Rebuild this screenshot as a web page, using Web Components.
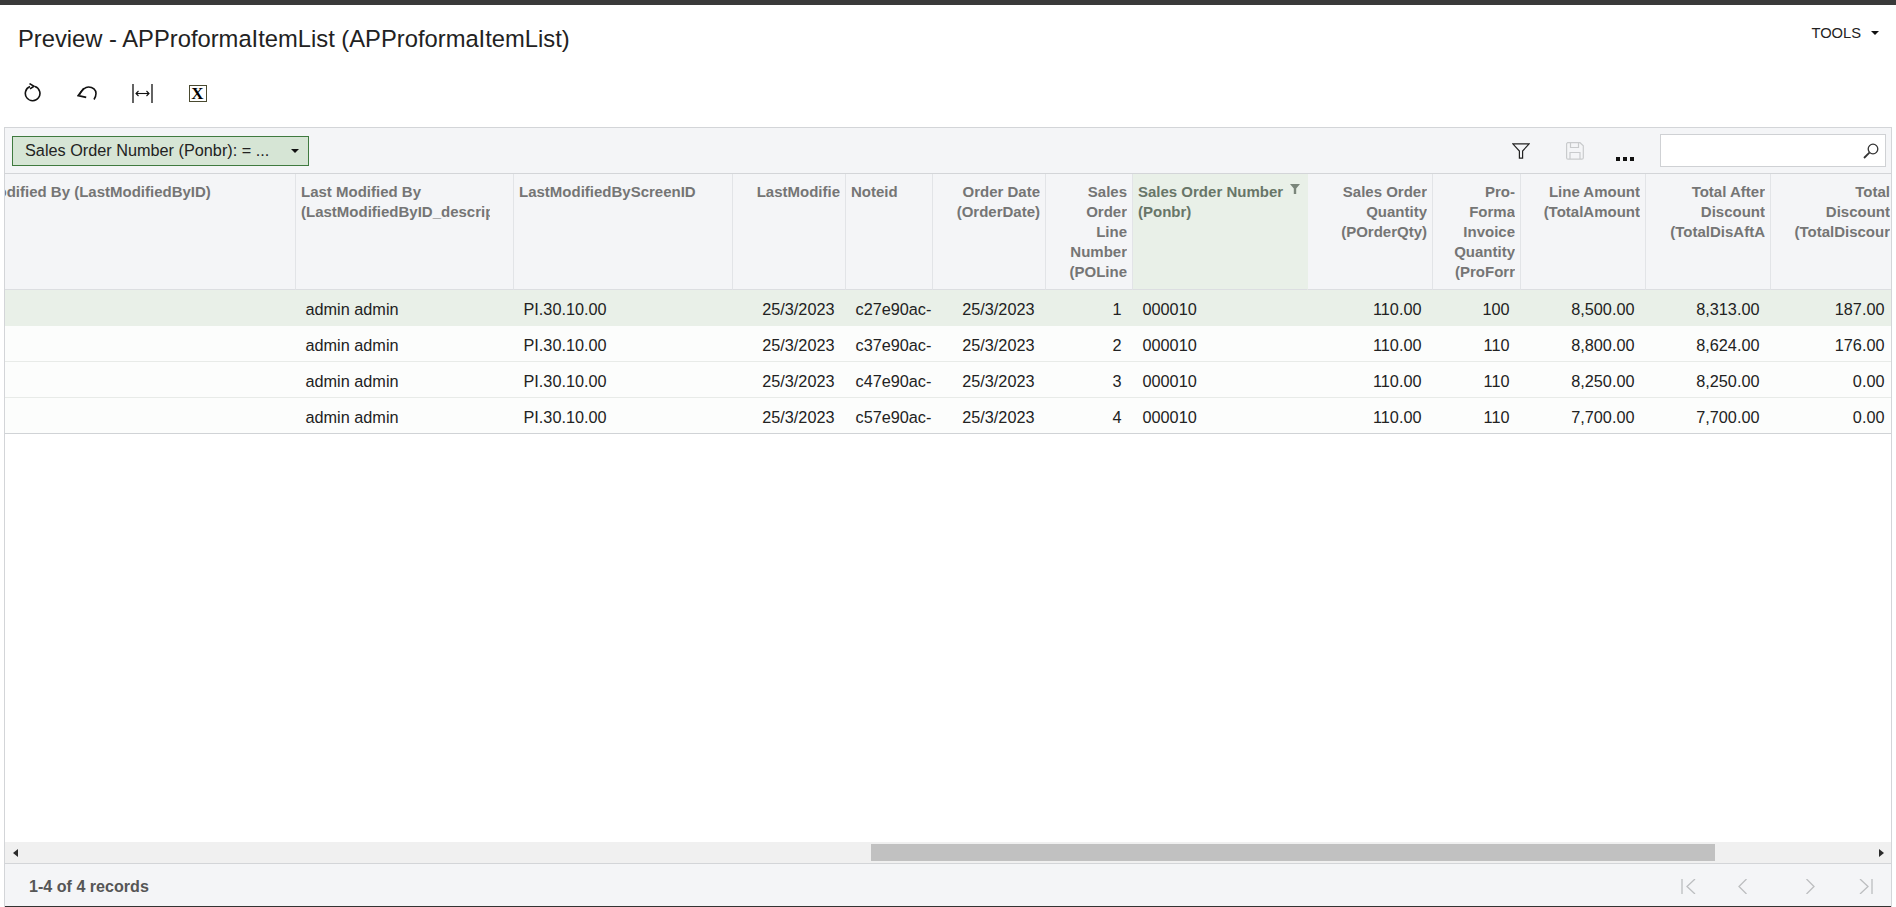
<!DOCTYPE html>
<html>
<head>
<meta charset="utf-8">
<title>Preview - APProformaItemList</title>
<style>
  html, body { margin: 0; height: 100%; overflow: hidden; background: #fff; }
  body { display: flex; flex-direction: column; height: 907px; font-family: "Liberation Sans", Arial, sans-serif; color: #222; }
</style>
</head>
<body>
<title-bar heading="Preview - APProformaItemList (APProformaItemList)"></title-bar>
<icon-toolbar></icon-toolbar>
<data-panel>
  <filter-bar slot="top" label="Sales Order Number (Ponbr): = ..."></filter-bar>
  <data-grid></data-grid>
  <h-scrollbar slot="bottom"></h-scrollbar>
  <pager-footer slot="bottom" summary="1-4 of 4 records"></pager-footer>
</data-panel>

<script>
class TitleBar extends HTMLElement {
  constructor() {
    super();
    this.attachShadow({ mode: 'open' });
    this.shadowRoot.innerHTML = `
      <style>
        :host { display: flex; justify-content: space-between; height: 66px; border-top: 5px solid #3a3a3a; flex: none; }
        h1 { margin: 0; padding: 21px 0 0 18px; font: 400 23.75px/26px "Liberation Sans", Arial, sans-serif; color: #222; }
        .tools { display: flex; align-items: center; gap: 10px; height: 14px; margin: 21px 17px 0 0; font-size: 14.7px; color: #222; }
        .caret { width: 0; height: 0; border: 4px solid transparent; border-top-color: #111; border-bottom: 0; }
      </style>
      <h1>${this.getAttribute('heading')}</h1>
      <div class="tools">TOOLS <span class="caret"></span></div>
    `;
  }
}

class IconToolbar extends HTMLElement {
  constructor() {
    super();
    this.attachShadow({ mode: 'open' });
    this.shadowRoot.innerHTML = `
      <style>
        :host { display: flex; flex: none; height: 44px; padding-left: 5px; margin-bottom: 12px; }
        .btn { width: 55px; display: flex; align-items: center; justify-content: center; }
        svg { display: block; fill: none; stroke: #111; stroke-width: 1.6; }
        .xl { width: 16px; height: 15px; border: 1px solid #4a4a30; box-shadow: inset 0 0 0 1px #fff; font: 700 17px/15px "Liberation Serif", serif; color: #000; text-align: center; }
      </style>
      <div class="btn">
        <svg style="margin-top:-2px" width="18" height="19" viewBox="0 0 18 19"><path d="M6 3.6A7.3 7.3 0 1 0 11 3.5"/><path d="M5.5 .6L10 3.2 6 5.8"/></svg>
      </div>
      <div class="btn">
        <svg style="margin-left:-2px" width="20" height="15" viewBox="0 0 20 15"><path d="M2.5 8.5C5 4 8 1 11.5 1 16 1 19 4 19 7.5 19 10 18 12 17 13.5"/><path d="M6.8 2.2L1.2 9.6l8 1.8"/></svg>
      </div>
      <div class="btn">
        <svg width="21" height="19" viewBox="0 0 21 19"><path d="M1 0v19M20 0v19" style="stroke-width:1.3"/><path d="M4 9.5h13" style="stroke-width:1.1"/><path d="M6.5 7L4 9.5 6.5 12M14.5 7L17 9.5 14.5 12" style="stroke-width:1.1"/></svg>
      </div>
      <div class="btn"><div class="xl">X</div></div>
    `;
  }
}

class DataPanel extends HTMLElement {
  constructor() {
    super();
    this.attachShadow({ mode: 'open' });
    this.shadowRoot.innerHTML = `
      <style>
        :host { display: flex; flex-direction: column; flex: 1; min-height: 0; margin: 0 4px; border: 1px solid #d3d5d8; border-bottom: 0; }
        .body { flex: 1; min-height: 0; overflow: hidden; background: #fff; }
      </style>
      <slot name="top"></slot>
      <div class="body"><slot></slot></div>
      <slot name="bottom"></slot>
    `;
  }
}

class FilterBar extends HTMLElement {
  constructor() {
    super();
    this.attachShadow({ mode: 'open' });
    this.shadowRoot.innerHTML = `
      <style>
        :host { display: flex; align-items: center; height: 45px; background: #f4f5f7; border-bottom: 1px solid #d3d5d8; padding: 0 5px 0 7px; }
        .chip { display: flex; align-items: center; justify-content: space-between; box-sizing: border-box; width: 297px; height: 30px; padding: 0 9px 0 12px; background: #d6e5d5; border: 1px solid #3f7a3f; font-size: 16.25px; color: #222; white-space: nowrap; }
        .caret { width: 0; height: 0; border: 4px solid transparent; border-top-color: #111; border-bottom: 0; }
        .right { margin-left: auto; display: flex; align-items: center; }
        .ic { display: flex; align-items: center; justify-content: center; }
        svg { display: block; fill: none; }
        .dots { display: flex; gap: 3px; align-self: flex-end; margin: 0 26px 6px 32px; }
        .dots i { width: 4px; height: 4px; background: #111; }
        .search { display: flex; align-items: center; justify-content: flex-end; box-sizing: border-box; width: 226px; height: 33px; padding-right: 6px; background: #fff; border: 1px solid #cfd1d4; }
      </style>
      <div class="chip"><span>${this.getAttribute('label')}</span><span class="caret"></span></div>
      <div class="right">
        <div class="ic" style="margin-right:36px">
          <svg width="18" height="16" viewBox="0 0 18 16" stroke="#222" stroke-width="1.2"><path d="M.8 .8h16.4L10.6 8v7.2H7.4V8z"/></svg>
        </div>
        <div class="ic">
          <svg width="18" height="18" viewBox="0 0 18 18" stroke="#c9cbcd" stroke-width="1.2"><path d="M1.6 .7h12.4l3.3 3v12a1.5 1.5 0 0 1-1.5 1.5H2a1.5 1.5 0 0 1-1.4-1.5V1.7z"/><path d="M4.5 1v4.5h8V1M4 17v-6.5h10V17"/></svg>
        </div>
        <div class="dots"><i></i><i></i><i></i></div>
        <div class="search">
          <svg width="16" height="16" viewBox="0 0 16 16" stroke="#333" stroke-width="1.3"><circle cx="10" cy="6" r="4.8"/><path d="M6.4 9.6L1 15" stroke-width="1.8"/></svg>
        </div>
      </div>
    `;
  }
}

// column width, alignment, header lines, four cell values
const COLUMNS = [
  { w: 351, a: 'l', h: 'Last Modified By (LastModifiedByID)', c: ['', '', '', ''] },
  { w: 218, a: 'l', h: 'Last Modified By<br>(LastModifiedByID_description)', c: ['admin admin', 'admin admin', 'admin admin', 'admin admin'], pr: 23 },
  { w: 219, a: 'l', h: 'LastModifiedByScreenID', c: ['PI.30.10.00', 'PI.30.10.00', 'PI.30.10.00', 'PI.30.10.00'] },
  { w: 113, a: 'r', h: 'LastModifie', c: ['25/3/2023', '25/3/2023', '25/3/2023', '25/3/2023'] },
  { w: 87, a: 'l', h: 'Noteid', c: ['c27e90ac-', 'c37e90ac-', 'c47e90ac-', 'c57e90ac-'], tight: true },
  { w: 113, a: 'r', h: 'Order Date<br>(OrderDate)', c: ['25/3/2023', '25/3/2023', '25/3/2023', '25/3/2023'] },
  { w: 87, a: 'r', h: 'Sales<br>Order<br>Line<br>Number<br>(POLine', c: ['1', '2', '3', '4'] },
  { w: 175, a: 'l', h: 'Sales Order Number<br>(Ponbr)', c: ['000010', '000010', '000010', '000010'], sel: true },
  { w: 125, a: 'r', h: 'Sales Order<br>Quantity<br>(POrderQty)', c: ['110.00', '110.00', '110.00', '110.00'] },
  { w: 88, a: 'r', h: 'Pro-<br>Forma<br>Invoice<br>Quantity<br>(ProForr', c: ['100', '110', '110', '110'] },
  { w: 125, a: 'r', h: 'Line Amount<br>(TotalAmount', c: ['8,500.00', '8,800.00', '8,250.00', '7,700.00'] },
  { w: 125, a: 'r', h: 'Total After<br>Discount<br>(TotalDisAftA', c: ['8,313.00', '8,624.00', '8,250.00', '7,700.00'] },
  { w: 125, a: 'r', h: 'Total<br>Discount<br>(TotalDiscour', c: ['187.00', '176.00', '0.00', '0.00'] },
];

class DataGrid extends HTMLElement {
  constructor() {
    super();
    this.attachShadow({ mode: 'open' });
    const head = COLUMNS.map((col) => {
      const funnel = col.sel ? '<svg class="fn" width="10" height="10" viewBox="0 0 10 10"><path d="M0 0h10L6.2 4.6V10H3.8V4.6z"/></svg>' : '';
      const style = col.pr ? `style="padding-right:${col.pr}px"` : '';
      return `<div class="hc ${col.a} ${col.sel ? 'sel' : ''}" ${style}>
        <div class="clip">${col.h}</div>${funnel}</div>`;
    }).join('');
    const rows = [0, 1, 2, 3].map((r) => COLUMNS.map((col) =>
      `<div class="td ${col.a} ${r === 0 ? 'first' : ''} ${r === 3 ? 'last' : ''} ${col.tight ? 'tight' : ''}"><span>${col.c[r]}</span></div>`
    ).join('')).join('');
    this.shadowRoot.innerHTML = `
      <style>
        :host { display: block; }
        .grid { display: grid; grid-template-columns: ${COLUMNS.map((c) => c.w + 'px').join(' ')}; grid-template-rows: 116px repeat(4, 36px); margin-left: -60px; width: max-content; }
        .hc { position: relative; box-sizing: border-box; padding: 8px 5px 0 5px; background: #f4f5f7; border-right: 1px solid #e2e4e7; border-bottom: 1px solid #dcdee1; font: 700 15px/20px "Liberation Sans", Arial, sans-serif; color: #757575; overflow: hidden; }
        .hc.sel { background: #e9f0e8; border-right-color: #e9f0e8; color: #687668; }
        .clip { overflow: hidden; height: 100%; white-space: nowrap; }
        .r { text-align: right; }
        .fn { position: absolute; top: 10px; right: 7px; fill: #7b867b; }
        .td { box-sizing: border-box; padding: 3px 11px 0 9.5px; display: flex; align-items: center; background: #fcfdfc; border-bottom: 1px solid #e8ebe8; font-size: 16.25px; color: #222; white-space: nowrap; overflow: hidden; }
        .td.r { justify-content: flex-end; padding-right: 11.5px; }
        .td.first { background: #e9f0e8; border-bottom-color: #e9f0e8; }
        .td.last { border-bottom-color: #d0d3d6; }
        .td.tight { padding-right: 0; }
      </style>
      <div class="grid">${head}${rows}</div>
    `;
  }
}

class HScrollbar extends HTMLElement {
  constructor() {
    super();
    this.attachShadow({ mode: 'open' });
    this.shadowRoot.innerHTML = `
      <style>
        :host { display: flex; align-items: center; height: 21px; background: #f0f0f0; border-bottom: 1px solid #d3d5d8; padding: 0 7px 0 8px; }
        .l, .r { width: 0; height: 0; border: 4.5px solid transparent; }
        .l { border-left: 0; border-right: 5px solid #2b2b2b; }
        .r { border-right: 0; border-left: 5px solid #2b2b2b; }
        .track { flex: 1; display: flex; height: 17px; padding-left: 853px; padding-right: 164px; }
        .thumb { flex: 1; background: #c1c1c1; }
      </style>
      <span class="l"></span>
      <div class="track"><div class="thumb"></div></div>
      <span class="r"></span>
    `;
  }
}

class PagerFooter extends HTMLElement {
  constructor() {
    super();
    this.attachShadow({ mode: 'open' });
    this.shadowRoot.innerHTML = `
      <style>
        :host { display: flex; align-items: center; justify-content: space-between; height: 40px; background: #f4f5f7; padding: 2px 18px 0 24px; border-bottom: 1px solid #333; }
        .txt { font: 700 16.1px/20px "Liberation Sans", Arial, sans-serif; color: #565656; }
        .pages { display: flex; align-items: center; }
        svg { display: block; fill: none; stroke: #bcbec0; stroke-width: 1.3; }
      </style>
      <div class="txt">${this.getAttribute('summary')}</div>
      <div class="pages">
        <svg width="15" height="15" viewBox="0 0 15 15"><path d="M1 0v15M14 0L6 7.5 14 15"/></svg>
        <svg style="margin-left:42px" width="9" height="15" viewBox="0 0 9 15"><path d="M8.5 0L1 7.5 8.5 15"/></svg>
        <svg style="margin-left:59px" width="9" height="15" viewBox="0 0 9 15"><path d="M.5 0L8 7.5 .5 15"/></svg>
        <svg style="margin-left:44px" width="14" height="15" viewBox="0 0 14 15"><path d="M13 0v15M1 0l8 7.5L1 15"/></svg>
      </div>
    `;
  }
}

customElements.define('title-bar', TitleBar);
customElements.define('icon-toolbar', IconToolbar);
customElements.define('data-panel', DataPanel);
customElements.define('filter-bar', FilterBar);
customElements.define('data-grid', DataGrid);
customElements.define('h-scrollbar', HScrollbar);
customElements.define('pager-footer', PagerFooter);
</script>
</body>
</html>
